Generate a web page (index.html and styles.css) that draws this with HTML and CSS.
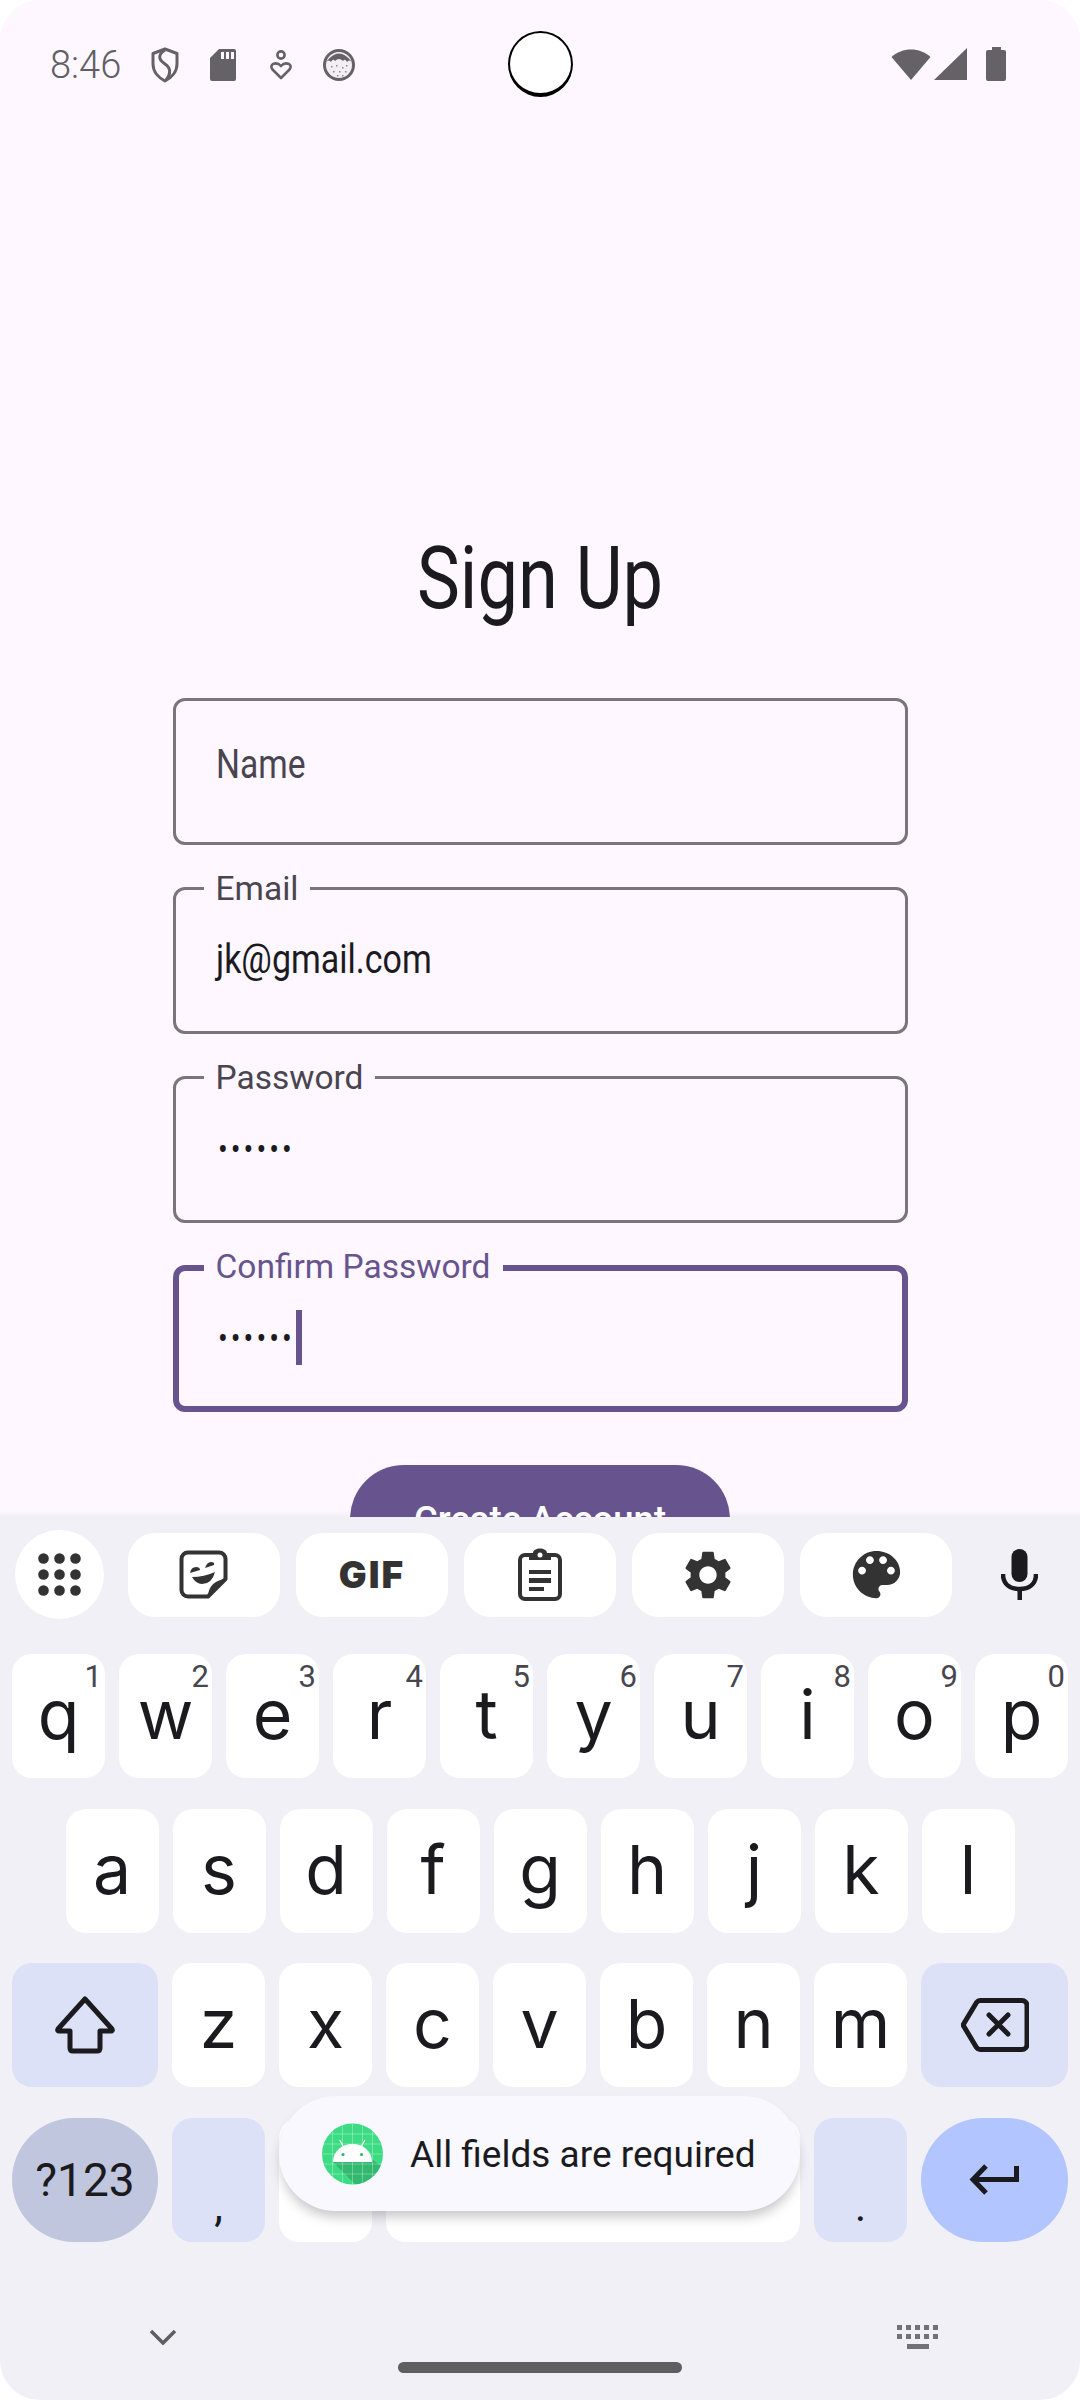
FILE: index.html
```html
<!DOCTYPE html>
<html lang="en">
<head>
    <meta charset="UTF-8">
    <meta name="viewport" content="width=device-width, initial-scale=1.0">
    <title>Sign Up</title>
    <link rel="stylesheet" href="styles.css">
</head>
<body>
<div class="screen">

    <!-- Status bar -->
    <div class="statusbar">
        <span class="time">8:46</span>
        <svg class="status-icon" viewBox="0 0 40 40">
            <path d="M20 4 L32 8.5 V19 C32 27 26 33 20 36 C14 33 8 27 8 19 V8.5 Z" fill="none" stroke="#646266" stroke-width="3" stroke-linejoin="round"/>
            <path d="M20 5 C12 10 14 15 20 19 C26 23 26 29 21 35" fill="none" stroke="#646266" stroke-width="3"/>
        </svg>
        <svg class="status-icon" viewBox="0 0 40 40">
            <path d="M16 4 H31 a2 2 0 0 1 2 2 V34 a2 2 0 0 1 -2 2 H9 a2 2 0 0 1 -2 -2 V13 Z" fill="#646266"/>
            <path d="M18 7 h3 v7 h-3z M23 7 h3 v7 h-3z M28 7 h3 v7 h-3z" fill="#fef7ff"/>
        </svg>
        <svg class="status-icon" viewBox="0 0 40 40">
            <circle cx="20" cy="10" r="3.6" fill="none" stroke="#646266" stroke-width="2.6"/>
            <path d="M20 33 L11.5 24.5 Q9 21 12 19 Q16.5 17 20 21 Q23.5 17 28 19 Q31 21 28.5 24.5 Z" fill="none" stroke="#646266" stroke-width="2.6" stroke-linejoin="round"/>
        </svg>
        <svg class="status-icon" viewBox="0 0 40 40">
            <circle cx="20" cy="20" r="16" fill="#646266"/>
            <circle cx="20" cy="20" r="13" fill="#f3eef4"/>
            <path d="M7 17 Q20 0 33 17 Q30 14 28 17 Q26 13 24 16 Q20 12 16 16 Q14 13 12 17 Q10 14 7 17Z" fill="#646266"/>
            <path d="M12 21h1.5v1.5H12z M17 20h1.5v1.5H17z M23 22h1.5v1.5H23z M27 20h1.5v1.5H27z M14 26h1.5v1.5H14z M20 26h1.5v1.5H20z M26 26h1.5v1.5H26z M18 30h1.5v1.5H18z M23 30h1.5v1.5H23z" fill="#8a878c"/>
        </svg>

        <div class="status-right">
            <svg class="wifi" viewBox="0 0 40 33"><path d="M0.5 10 C11 0 29 0 39.5 10 L20 33 Z" fill="#646266"/></svg>
            <svg class="signal" viewBox="0 0 33 33"><path d="M33 1 V33 H0 Z" fill="#646266"/></svg>
            <svg class="battery" viewBox="0 0 20 34"><path d="M6 0 H15 V3 H18 a2 2 0 0 1 2 2 V32 a2 2 0 0 1 -2 2 H2 a2 2 0 0 1 -2 -2 V5 a2 2 0 0 1 2 -2 H6 Z" fill="#646266"/></svg>
        </div>
    </div>

    <div class="camera"></div>

    <!-- Sign up form -->
    <div class="main">
        <h1><span>Sign Up</span></h1>

        <div class="form">
            <div class="field">
                <span class="value placeholder">Name</span>
            </div>
            <div class="field">
                <label>Email</label>
                <span class="value">jk@gmail.com</span>
            </div>
            <div class="field">
                <label>Password</label>
                <span class="value dots">••••••</span>
            </div>
            <div class="field focused">
                <label>Confirm Password</label>
                <span class="value dots">••••••</span>
                <span class="cursor"></span>
            </div>
        </div>

        <div class="create-btn">Create Account</div>
    </div>

    <!-- Keyboard -->
    <div class="keyboard">
        <div class="toolbar">
            <div class="tool-round">
                <svg width="43" height="43" viewBox="0 0 43 43" fill="#333">
                    <circle cx="5.5" cy="5.5" r="5.3"/><circle cx="21.5" cy="5.5" r="5.3"/><circle cx="37.5" cy="5.5" r="5.3"/>
                    <circle cx="5.5" cy="21.5" r="5.3"/><circle cx="21.5" cy="21.5" r="5.3"/><circle cx="37.5" cy="21.5" r="5.3"/>
                    <circle cx="5.5" cy="37.5" r="5.3"/><circle cx="21.5" cy="37.5" r="5.3"/><circle cx="37.5" cy="37.5" r="5.3"/>
                </svg>
            </div>
            <div class="tool">
                <svg class="sticker" width="49" height="49" viewBox="0 0 49 49">
                    <path d="M9 2.5 H40 a6.500 6.500 0 0 1 6.500 6.500 V29 L29 46.500 H9 a6.500 6.500 0 0 1 -6.500 -6.500 V9 a6.500 6.500 0 0 1 6.500 -6.500 Z" fill="none" stroke="#333" stroke-width="4" stroke-linejoin="round"/>
                    <path d="M47 29 L29 47 C29 36 36 30 47 29 Z" fill="#333"/>
                    <path d="M11 23 Q12 17 17 17 Q21 17 21 20 Z M26 18 Q28 12 32 12 Q36 12 35 15 Z M13 27 Q25 27 36 22 Q33 34 23 34 Q17 34 13 27 Z" fill="#333"/>
                </svg>
            </div>
            <div class="tool"><span class="gif">GIF</span></div>
            <div class="tool">
                <svg width="44" height="53" viewBox="0 0 44 53">
                    <rect x="2" y="7" width="40" height="44" rx="5" fill="none" stroke="#333" stroke-width="4"/>
                    <path d="M11 5 H15 C15 -1 29 -1 29 5 H33 V12 H11 Z" fill="#333"/>
                    <circle cx="22" cy="7" r="2.500" fill="#fff"/>
                    <path d="M11 22 H33 V26 H11 Z M11 30 H33 V35 H11 Z M11 39 H26 V43 H11 Z" fill="#333"/>
                </svg>
            </div>
            <div class="tool">
                <svg width="58" height="58" viewBox="0 0 24 24" fill="#333">
                    <path d="M19.14 12.94c.04-.3.06-.61.06-.94 0-.32-.02-.64-.07-.94l2.03-1.58c.18-.14.23-.41.12-.61l-1.92-3.32c-.12-.22-.37-.29-.59-.22l-2.39.96c-.5-.38-1.03-.7-1.62-.94l-.36-2.54c-.04-.24-.24-.41-.48-.41h-3.84c-.24 0-.43.17-.47.41l-.36 2.54c-.59.24-1.13.57-1.62.94l-2.39-.96c-.22-.08-.47 0-.59.22L2.74 8.87c-.12.21-.08.47.12.61l2.03 1.58c-.05.3-.09.63-.09.94s.02.64.07.94l-2.03 1.58c-.18.14-.23.41-.12.61l1.92 3.32c.12.22.37.29.59.22l2.39-.96c.5.38 1.03.7 1.62.94l.36 2.54c.05.24.24.41.48.41h3.84c.24 0 .44-.17.47-.41l.36-2.54c.59-.24 1.13-.56 1.62-.94l2.39.96c.22.08.47 0 .59-.22l1.92-3.32c.12-.22.07-.47-.12-.61l-2.01-1.58zM12 15.6c-1.98 0-3.6-1.62-3.6-3.6s1.62-3.6 3.6-3.6 3.6 1.62 3.6 3.6-1.62 3.6-3.6 3.6z"/>
                </svg>
            </div>
            <div class="tool">
                <svg width="63" height="63" viewBox="0 0 24 24" fill="#333">
                    <path d="M12 3c-4.97 0-9 4.03-9 9s4.03 9 9 9c.83 0 1.5-.67 1.5-1.5 0-.39-.15-.74-.39-1.01-.23-.26-.38-.61-.38-.99 0-.83.67-1.5 1.5-1.5H16c2.76 0 5-2.24 5-5 0-4.42-4.03-8-9-8zm-5.5 9c-.83 0-1.5-.67-1.5-1.5S5.67 9 6.5 9 8 9.67 8 10.5 7.33 12 6.5 12zm3-4C8.67 8 8 7.33 8 6.5S8.67 5 9.5 5s1.5.67 1.5 1.500S10.33 8 9.5 8zm5 0c-.83 0-1.5-.67-1.5-1.5S13.67 5 14.5 5s1.5.67 1.5 1.500S15.33 8 14.5 8zm3 4c-.83 0-1.5-.67-1.5-1.5S16.67 9 17.5 9s1.5.67 1.5 1.500-.67 1.500-1.500 1.500z"/>
                </svg>
            </div>
            <svg class="mic" width="37" height="51" viewBox="0 0 37 51">
                <rect x="10.500" y="0" width="16" height="33" rx="8" fill="#1b1b1f"/>
                <path d="M2 25 C2 35 9 40 18.500 40 C28 40 35 35 35 25" fill="none" stroke="#1b1b1f" stroke-width="4.500"/>
                <rect x="16.500" y="39" width="4.500" height="12" fill="#1b1b1f"/>
            </svg>
        </div>

        <div class="keys">
            <div class="row">
                <div class="key"><span class="hint">1</span>q</div>
                <div class="key"><span class="hint">2</span>w</div>
                <div class="key"><span class="hint">3</span>e</div>
                <div class="key"><span class="hint">4</span>r</div>
                <div class="key"><span class="hint">5</span>t</div>
                <div class="key"><span class="hint">6</span>y</div>
                <div class="key"><span class="hint">7</span>u</div>
                <div class="key"><span class="hint">8</span>i</div>
                <div class="key"><span class="hint">9</span>o</div>
                <div class="key"><span class="hint">0</span>p</div>
            </div>
            <div class="row">
                <div class="key">a</div>
                <div class="key">s</div>
                <div class="key">d</div>
                <div class="key">f</div>
                <div class="key">g</div>
                <div class="key">h</div>
                <div class="key">j</div>
                <div class="key">k</div>
                <div class="key">l</div>
            </div>
            <div class="row">
                <div class="key wide mod">
                    <svg width="62" height="58" viewBox="0 0 62 58">
                        <path d="M31 3 L58 33 Q59 35 57 35 H46 V52 Q46 55 43 55 H19 Q16 55 16 52 V35 H5 Q3 35 4 33 Z" fill="none" stroke="#1b1b1f" stroke-width="5" stroke-linejoin="round"/>
                    </svg>
                </div>
                <div class="key">z</div>
                <div class="key">x</div>
                <div class="key">c</div>
                <div class="key">v</div>
                <div class="key">b</div>
                <div class="key">n</div>
                <div class="key">m</div>
                <div class="key wide end mod">
                    <svg width="68" height="54" viewBox="0 0 68 54">
                        <path d="M19 2.500 H61 a5 5 0 0 1 5 5 V46.500 a5 5 0 0 1 -5 5 H19 Q17 51.500 15.500 49.500 L2 27 L15.500 4.500 Q17 2.500 19 2.500 Z" fill="none" stroke="#1b1b1f" stroke-width="5" stroke-linejoin="round"/>
                        <path d="M28 17 L47 36 M47 17 L28 36" stroke="#1b1b1f" stroke-width="5" stroke-linecap="round"/>
                    </svg>
                </div>
            </div>
            <div class="row">
                <div class="key wide sym">?123</div>
                <div class="key mod punct">,</div>
                <div class="key"></div>
                <div class="key space"></div>
                <div class="key mod punct">.</div>
                <div class="key wide end enter">
                    <svg width="52" height="32" viewBox="0 0 52 32">
                        <path d="M17 2 L4 15.500 L17 29 M4 15.500 H47.500 V2" fill="none" stroke="#1b1b1f" stroke-width="5"/>
                    </svg>
                </div>
            </div>
        </div>

        <div class="navbar">
            <svg width="28" height="16" viewBox="0 0 28 16"><path d="M2 2 L14 14 L26 2" fill="none" stroke="#5f5f62" stroke-width="3.500"/></svg>
            <svg width="42" height="24" viewBox="0 0 42 24" fill="#727276">
                <path d="M0 0h5v5H0z M9 0h5v5H9z M18 0h5v5h-5z M27 0h5v5h-5z M36 0h5v5h-5z M0 9h5v5H0z M9 9h5v5H9z M18 9h5v5h-5z M27 9h5v5h-5z M36 9h5v5h-5z M10 19h22v5H10z"/>
            </svg>
        </div>
        <div class="home-bar"></div>
    </div>

    <!-- Toast -->
    <div class="toast">
        <svg class="toast-icon" width="61" height="62" viewBox="0 0 61 62">
            <defs><clipPath id="round"><circle cx="30.500" cy="31" r="30.500"/></clipPath></defs>
            <g clip-path="url(#round)">
                <rect width="61" height="62" fill="#3ddc84"/>
                <path d="M11 39 H50 V36 L61 45 V62 H34 Z" fill="#32b96f"/>
                <path d="M10.500 0V62 M20.500 0V62 M30.500 0V62 M40.500 0V62 M50.500 0V62 M0 11H61 M0 21H61 M0 31H61 M0 41H61 M0 51H61" stroke="#fff" stroke-opacity=".3" stroke-width="1"/>
                <path d="M11 39 C11 28 20 21 30.500 21 C41 21 50 28 50 39 Z" fill="#fff"/>
                <path d="M17.700 17 L21 23 M43 17 L39.500 23" stroke="#fff" stroke-width="1.300"/>
                <circle cx="21" cy="31.500" r="1.600" fill="#2fb56d"/>
                <circle cx="39.500" cy="31.500" r="1.600" fill="#2fb56d"/>
            </g>
        </svg>
        <span class="toast-text">All fields are required</span>
    </div>

</div>
</body>
</html>
```

FILE: styles.css
```css
body {
    margin: 0;
    background-color: #ffffff;
    font-family: Roboto, "Noto Sans", sans-serif;
    color: #1b1b1f;
}
.screen {
    position: relative;
    width: 1080px;
    height: 2400px;
    display: flex;
    flex-direction: column;
    overflow: hidden;
    border-radius: 40px;
    background-color: #fef7ff;
}

/* Status bar */
.statusbar {
    height: 128px;
    flex-shrink: 0;
    box-sizing: border-box;
    display: flex;
    align-items: flex-start;
    padding: 45px 74px 0 50px;
}
.time {
    width: 70px;
    margin-right: 25px;
    font-size: 38px;
    line-height: 40px;
    font-weight: 300;
    color: #5f5e64;
}
.status-icon {
    width: 40px;
    height: 40px;
    margin-right: 18px;
}
.status-right {
    margin-left: auto;
    margin-top: 2px;
    display: flex;
    align-items: flex-start;
}
.wifi {
    width: 40px;
    height: 33px;
    margin-right: 3px;
}
.signal {
    width: 33px;
    height: 33px;
    margin-right: 19px;
}
.battery {
    width: 20px;
    height: 34px;
}
.camera {
    position: absolute;
    left: 508px;
    top: 31px;
    width: 65px;
    height: 66px;
    box-sizing: border-box;
    border-radius: 50%;
    background-color: #ffffff;
    border: 2px solid #000000;
    border-bottom-width: 4px;
}

/* Form */
.main {
    flex: 1;
    min-height: 0;
    overflow: hidden;
    background: linear-gradient(to top, #f0f0f6, #fef7ff 6px);
}
h1 {
    margin: 400px 0 70px;
    text-align: center;
    font-size: 88px;
    line-height: 100px;
    font-weight: 400;
}
h1 span {
    display: inline-block;
    transform: scaleX(.82);
}
.form {
    width: 735px;
    margin: 0 auto;
    display: flex;
    flex-direction: column;
    gap: 42px;
}
.field {
    position: relative;
    height: 147px;
    box-sizing: border-box;
    padding: 45px 0 0 40px;
    border: 3px solid #79747e;
    border-radius: 12px;
    display: flex;
    align-items: flex-start;
}
.field label {
    position: absolute;
    left: 28px;
    top: -20px;
    padding: 0 12px;
    font-size: 33.5px;
    line-height: 38px;
    color: #49454f;
    background-color: #fef7ff;
}
.value {
    display: inline-block;
    font-size: 40px;
    line-height: 50px;
    transform: scaleX(.85);
    transform-origin: left;
}
.placeholder {
    margin-top: -6px;
    color: #49454f;
    transform: scaleX(.84);
}
.value.dots {
    width: 78px;
    margin-left: 2px;
    font-size: 34px;
    letter-spacing: 3.600px;
    white-space: nowrap;
}
.field.focused {
    padding: 42px 0 0 37px;
    border: 6px solid #67548e;
}
.field.focused label {
    left: 25px;
    top: -23px;
    color: #67548e;
}
.cursor {
    width: 6px;
    height: 55px;
    margin-top: -3px;
    background-color: #67548e;
}
.create-btn {
    width: 380px;
    height: 108px;
    margin: 53px auto 0;
    border-radius: 54px;
    display: flex;
    align-items: center;
    justify-content: center;
    background-color: #67548e;
    color: #ffffff;
    font-size: 36.5px;
    font-weight: 500;
}

/* Keyboard */
.keyboard {
    height: 883px;
    flex-shrink: 0;
    box-sizing: border-box;
    padding-top: 13px;
    background-color: #f0f0f6;
}
.toolbar {
    display: flex;
    align-items: center;
    gap: 16px;
    padding-left: 15px;
    height: 89px;
}
.tool-round {
    width: 89px;
    height: 89px;
    margin-right: 8px;
    border-radius: 50%;
    background-color: #ffffff;
    display: flex;
    align-items: center;
    justify-content: center;
}
.tool {
    width: 152px;
    height: 84px;
    border-radius: 27px;
    background-color: #ffffff;
    display: flex;
    align-items: center;
    justify-content: center;
}
.sticker {
    margin-right: 2px;
}
.gif {
    font-family: Inter, sans-serif;
    font-size: 37px;
    font-weight: 900;
    letter-spacing: 2px;
    color: #333333;
}
.mic {
    margin-left: 33px;
}
.keys {
    margin-top: 35px;
    display: flex;
    flex-direction: column;
    gap: 30.7px;
    padding: 0 12px;
}
.row {
    display: flex;
    justify-content: center;
    gap: 14px;
}
.key {
    position: relative;
    width: 93px;
    height: 124px;
    box-sizing: border-box;
    padding-top: 25px;
    border-radius: 20px;
    background-color: #ffffff;
    display: flex;
    justify-content: center;
    font-family: Inter, Roboto, sans-serif;
    font-size: 68px;
    line-height: 70px;
}
.hint {
    position: absolute;
    top: 7px;
    right: 3px;
    font-family: Roboto, sans-serif;
    font-size: 31px;
    line-height: 31px;
    color: #47464f;
}
.key.wide {
    width: 146px;
    padding-top: 0;
    align-items: center;
}
.key.wide.end {
    width: 147px;
}
.mod {
    background-color: #dde1f7;
}
.key.sym {
    border-radius: 62px;
    background-color: #c0c6de;
    font-family: Roboto, sans-serif;
    font-size: 46px;
}
.key.enter {
    border-radius: 62px;
    background-color: #b3c5ff;
}
.key.punct {
    padding-top: 68px;
    font-family: Roboto, sans-serif;
    font-size: 44px;
    line-height: 40px;
}
.key.space {
    flex: 1;
}
.navbar {
    margin-top: 83px;
    height: 24px;
    padding: 0 141px 0 149px;
    display: flex;
    align-items: center;
    justify-content: space-between;
}
.home-bar {
    width: 284px;
    height: 11px;
    margin: 13px auto 0;
    border-radius: 6px;
    background-color: #5f5f62;
}

/* Toast */
.toast {
    position: absolute;
    left: 279px;
    top: 2096px;
    width: 521px;
    height: 115px;
    box-sizing: border-box;
    padding: 2px 0 0 43px;
    border-radius: 57px;
    background-color: #f8f8fe;
    box-shadow: 0 8px 12px -2px rgba(0, 0, 0, .22);
    display: flex;
    align-items: center;
}
.toast-icon {
    margin: -2px 27px 0 0;
    flex-shrink: 0;
}
.toast-text {
    font-size: 37px;
    color: #1b1b1f;
    white-space: nowrap;
}
```
